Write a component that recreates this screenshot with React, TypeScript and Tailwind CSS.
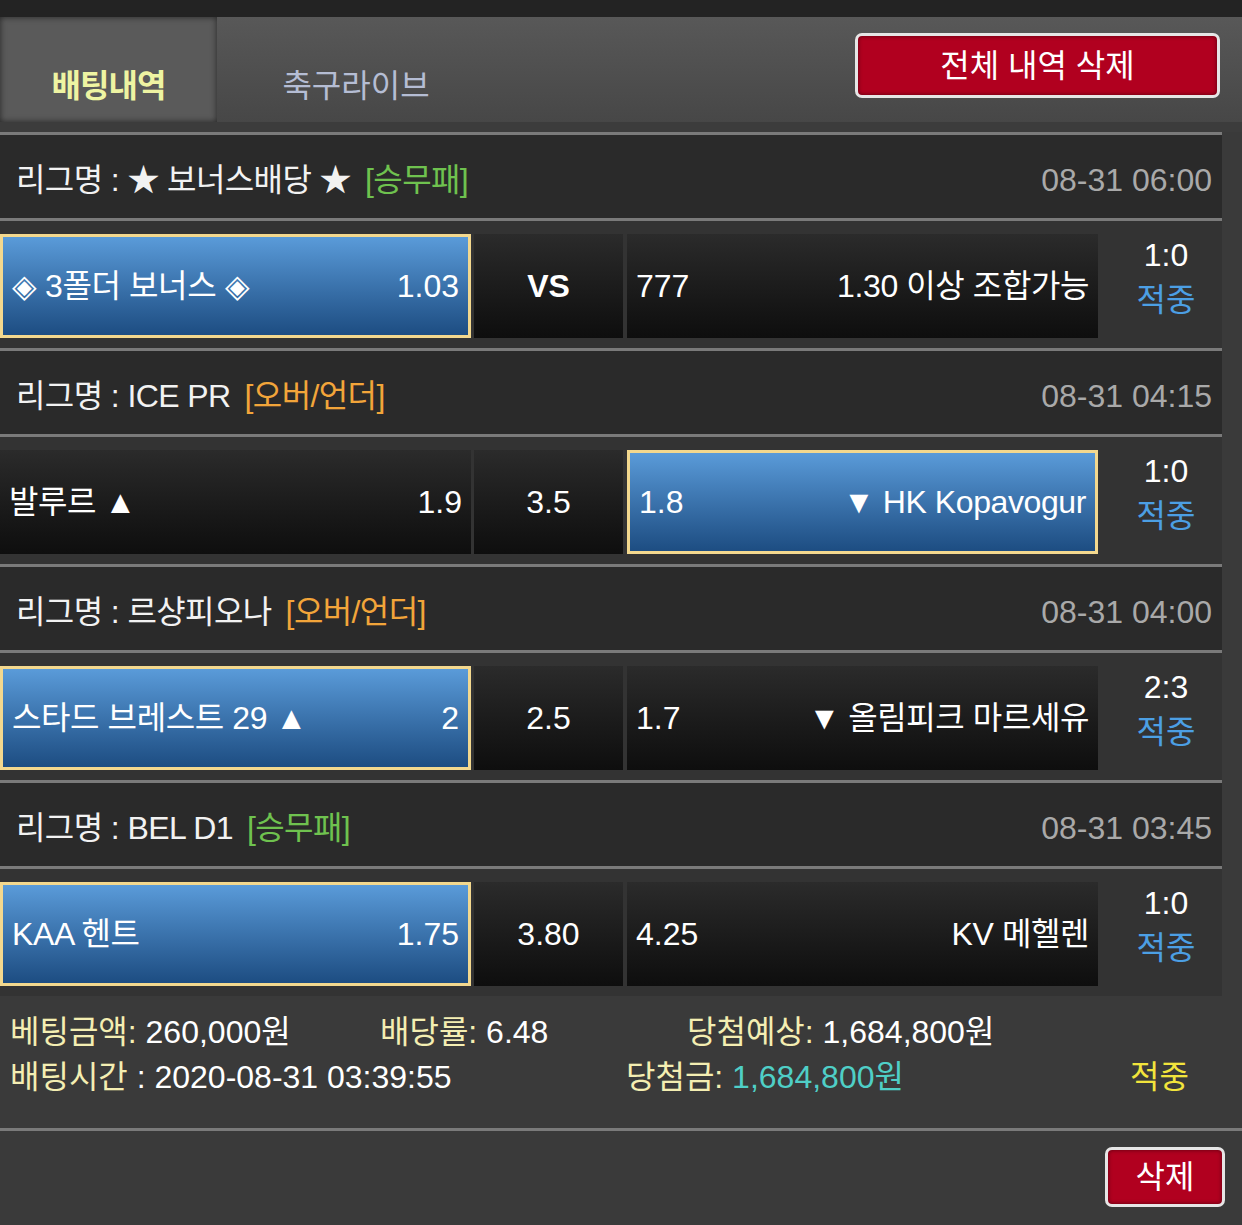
import React from "react";

type Side = { name: string; odds: string; picked?: boolean };

type Bet = {
	league: string;
	kind: string;
	kindColor: string;
	time: string;
	home: Side;
	mid: string;
	midBold?: boolean;
	away: Side;
	score: string;
};

const bets: Bet[] = [
	{
		league: "★ 보너스배당 ★",
		kind: "[승무패]",
		kindColor: "text-[#6fc24f]",
		time: "08-31 06:00",
		home: { name: "◈ 3폴더 보너스 ◈", odds: "1.03", picked: true },
		mid: "VS",
		midBold: true,
		away: { name: "1.30 이상 조합가능", odds: "777" },
		score: "1:0",
	},
	{
		league: "ICE PR",
		kind: "[오버/언더]",
		kindColor: "text-[#f2a53a]",
		time: "08-31 04:15",
		home: { name: "발루르 ▲", odds: "1.9" },
		mid: "3.5",
		away: { name: "▼ HK Kopavogur", odds: "1.8", picked: true },
		score: "1:0",
	},
	{
		league: "르샹피오나",
		kind: "[오버/언더]",
		kindColor: "text-[#f2a53a]",
		time: "08-31 04:00",
		home: { name: "스타드 브레스트 29 ▲", odds: "2", picked: true },
		mid: "2.5",
		away: { name: "▼ 올림피크 마르세유", odds: "1.7" },
		score: "2:3",
	},
	{
		league: "BEL D1",
		kind: "[승무패]",
		kindColor: "text-[#6fc24f]",
		time: "08-31 03:45",
		home: { name: "KAA 헨트", odds: "1.75", picked: true },
		mid: "3.80",
		away: { name: "KV 메헬렌", odds: "4.25" },
		score: "1:0",
	},
];

function cellClass(picked?: boolean) {
	return picked
		? "border-[3px] border-[#f3d88e] bg-gradient-to-b from-[#5a9bd9] to-[#1d4d82] px-[9px]"
		: "bg-gradient-to-b from-[#2b2b2b] to-[#0e0e0e] px-[9px]";
}

function BetRow({ bet }: { bet: Bet }) {
	return (
		<div>
			<div className="h-[3px] bg-[#7a7a7a]" />
			<div className="h-[83px] bg-[#2a2a2a] flex items-center justify-between pl-[16px] pr-[10px] pt-[6px]">
				<div className="flex items-center text-[#f2f2f2] tracking-[-0.6px]">
					<span>리그명 : {bet.league}</span>
					<span className={`ml-[14px] ${bet.kindColor}`}>{bet.kind}</span>
				</div>
				<span className="text-[#a9a9a9]">{bet.time}</span>
			</div>
			<div className="h-[3px] bg-[#7a7a7a]" />
			<div className="h-[127px] bg-[#333333] flex pt-[13px] pb-[10px]">
				<div className={`w-[471px] flex items-center justify-between text-white ${cellClass(bet.home.picked)}`}>
					<span className="tracking-[-0.4px]">{bet.home.name}</span>
					<span>{bet.home.odds}</span>
				</div>
				<div className={`ml-[3px] w-[149px] flex items-center justify-center text-white bg-gradient-to-b from-[#2b2b2b] to-[#0e0e0e] ${bet.midBold ? "font-bold" : ""}`}>
					{bet.mid}
				</div>
				<div className={`ml-[4px] w-[471px] flex items-center justify-between text-white ${cellClass(bet.away.picked)}`}>
					<span>{bet.away.odds}</span>
					<span className="tracking-[-0.4px]">{bet.away.name}</span>
				</div>
				<div className="flex-1 flex flex-col items-center justify-center leading-[45px] pl-[12px] pb-[16px]">
					<span className="text-white">{bet.score}</span>
					<span className="text-[#4c9fe4]">적중</span>
				</div>
			</div>
		</div>
	);
}

export default function App() {
	return (
		<div
			className="w-[1242px] min-h-[1225px] bg-[#3a3a3a] text-[32px] leading-none"
			style={{ fontFamily: '"Liberation Sans", "Noto Sans CJK KR", sans-serif' }}
		>
			<div className="h-[17px] bg-[#232323]" />

			<div className="h-[105px] flex bg-gradient-to-b from-[#585858] to-[#474747]">
				<div className="w-[217px] bg-[#5a5a5a] shadow-[inset_0_0_6px_rgba(0,0,0,0.6)] flex items-center justify-center pt-[32px]">
					<span className="font-bold text-[#eef4a2] tracking-[-1px]">배팅내역</span>
				</div>
				<div className="w-[278px] flex items-center justify-center pt-[32px]">
					<span className="text-[#b5bdd4]">축구라이브</span>
				</div>
				<div className="flex-1 flex justify-end pr-[22px] pt-[16px]">
					<button className="w-[365px] h-[65px] rounded-[7px] border-[3px] border-[#e6e6e6] bg-[#b1001f] text-white shadow-[inset_0_0_4px_rgba(0,0,0,0.5)]">
						전체 내역 삭제
					</button>
				</div>
			</div>

			<div className="h-[10px] bg-[#3c3c3c]" />

			<div className="w-[1222px]">
				{bets.map((bet, i) => (
					<BetRow key={i} bet={bet} />
				))}
			</div>

			<div className="h-[132px] pt-[14px] pl-[10px] leading-[45px]">
				<div className="flex">
					<span className="w-[370px]">
						<span className="text-[#f4eeb2]">베팅금액:</span>
						<span className="text-white"> 260,000원</span>
					</span>
					<span className="w-[307px]">
						<span className="text-[#f4eeb2]">배당률:</span>
						<span className="text-white"> 6.48</span>
					</span>
					<span>
						<span className="text-[#f4eeb2]">당첨예상:</span>
						<span className="text-white"> 1,684,800원</span>
					</span>
				</div>
				<div className="flex">
					<span className="w-[616px]">
						<span className="text-[#f4eeb2]">배팅시간 </span>
						<span className="text-white">: 2020-08-31 03:39:55</span>
					</span>
					<span className="w-[504px]">
						<span className="text-[#f4eeb2]">당첨금:</span>
						<span className="text-[#4fcfc7]"> 1,684,800원</span>
					</span>
					<span className="text-[#f2e43c]">적중</span>
				</div>
			</div>

			<div className="h-[3px] bg-[#7a7a7a]" />

			<div className="flex justify-end pr-[17px] pt-[16px] pb-[18px]">
				<button className="w-[120px] h-[60px] rounded-[7px] border-[3px] border-[#e6e6e6] bg-[#b1001f] text-white shadow-[inset_0_0_4px_rgba(0,0,0,0.5)]">
					삭제
				</button>
			</div>
		</div>
	);
}
